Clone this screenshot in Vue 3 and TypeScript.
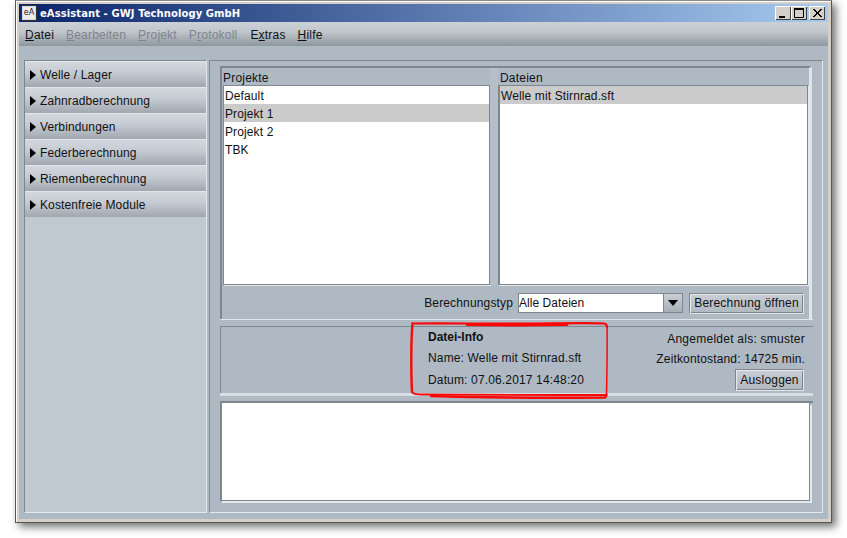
<script setup lang="ts">
const navItems: string[] = ['Welle / Lager', 'Zahnradberechnung', 'Verbindungen', 'Federberechnung', 'Riemenberechnung', 'Kostenfreie Module']
const menus = [
  { k: 'D', r: 'atei', off: false, pre: '' },
  { k: 'B', r: 'earbeiten', off: true, pre: '' },
  { k: 'P', r: 'rojekt', off: true, pre: '' },
  { k: 'r', r: 'otokoll', off: true, pre: 'P' },
  { k: 'x', r: 'tras', off: false, pre: 'E' },
  { k: 'H', r: 'ilfe', off: false, pre: '' },
]
const projects: string[] = ['Default', 'Projekt 1', 'Projekt 2', 'TBK']
</script>

<template>
  <div class="page">
    <div class="window">
      <header class="titlebar">
        <span class="appicon">eA</span>
        <span class="title">eAssistant - GWJ Technology GmbH</span>
        <span class="winbtns">
          <span class="wb"><svg width="16" height="14" viewBox="0 0 16 14"><rect x="4" y="10" width="6" height="2" fill="#000" /></svg></span>
          <span class="wb"><svg width="16" height="14" viewBox="0 0 16 14"><path d="M3.5 2.5h9v9h-9z" fill="none" stroke="#000" /><rect x="3" y="2" width="10" height="2" fill="#000" /></svg></span>
          <span class="wb gap"><svg width="16" height="14" viewBox="0 0 16 14"><path d="M4 3l8 8M5 3l8 8M12 3l-8 8M13 3l-8 8" stroke="#000" fill="none" /></svg></span>
        </span>
      </header>
      <nav class="menubar">
        <span v-for="m in menus" :key="m.k + m.r" class="menu" :class="{ off: m.off }">{{ m.pre }}<u>{{ m.k }}</u>{{ m.r }}</span>
      </nav>
      <div class="body">
        <aside class="side">
          <div v-for="n in navItems" :key="n" class="nav">
            <svg class="tri" width="6" height="10" viewBox="0 0 6 10"><path d="M0 0l6 5-6 5z" fill="#000" /></svg>
            <span>{{ n }}</span>
          </div>
        </aside>
        <main class="main">
          <section class="upper">
            <div class="lists">
              <div class="col left">
                <div class="head">Projekte</div>
                <ul class="list">
                  <li v-for="p in projects" :key="p" :class="{ sel: p === 'Projekt 1' }">{{ p }}</li>
                </ul>
              </div>
              <div class="split"></div>
              <div class="col right">
                <div class="head">Dateien</div>
                <ul class="list">
                  <li class="sel">Welle mit Stirnrad.sft</li>
                </ul>
              </div>
            </div>
            <div class="toolbar">
              <span class="lbl">Berechnungstyp</span>
              <div class="combo">
                <span class="val">Alle Dateien</span>
                <span class="arrow"><svg width="10" height="6" viewBox="0 0 10 6"><path d="M0 0h10L5 6z" fill="#000" /></svg></span>
              </div>
              <button class="btn open" type="button">Berechnung öffnen</button>
            </div>
          </section>
          <div class="band"></div>
          <section class="info">
            <div class="fileinfo">
              <div class="fh">Datei-Info</div>
              <div class="fl">Name: Welle mit Stirnrad.sft</div>
              <div class="fl">Datum: 07.06.2017 14:48:20</div>
            </div>
            <div class="account">
              <div class="al">Angemeldet als: smuster</div>
              <div class="al">Zeitkontostand: 14725 min.</div>
              <button class="btn logout" type="button">Ausloggen</button>
            </div>
          </section>
          <div class="band2"></div>
          <div class="log"></div>
        </main>
      </div>
    </div>
    <svg class="mark" width="210" height="90" viewBox="0 0 210 90">
      <g fill="none" stroke="#fa0808" stroke-linecap="round" stroke-linejoin="round">
        <path d="M6 5.500C40 5 90 6 130 5.500S190 5 197 5.500Q200 6 200 9" stroke-width="2.2" />
        <path d="M60 6.500c30 .5 70 .5 100 0" stroke-width="3" />
        <path d="M200 9c.5 15 0 40-.5 68" stroke-width="1.5" />
        <path d="M5.500 5.500C4 20 4 55 5 74" stroke-width="2.4" />
        <path d="M5 74c1 2 3 2.500 10 2.500 50 .5 120 .5 184 .5" stroke-width="1.8" />
        <path d="M24 78c50 1.500 110 2 174 1.500 1.500-.5 1.500-1.500 1.500-3" stroke-width="2.4" />
      </g>
    </svg>
  </div>
</template>

<style>
html, body { margin: 0; background: #fff; }
</style>

<style scoped>
.page {
  position: relative;
  width: 847px;
  height: 538px;
  padding-left: 15px;
  box-sizing: border-box;
  overflow: hidden;
  background: #fff;
  font-family: "Liberation Sans", Arial, sans-serif;
  font-size: 12px;
  color: #111;
}
.window {
  width: 817px;
  height: 523px;
  box-sizing: border-box;
  border: 1px solid #555;
  border-top-color: #8a8a8a;
  padding: 3px;
  background: #d4d0c8;
  box-shadow: inset 1px 1px 0 #fff, 4px 4px 8px rgba(0, 0, 0, 0.55);
  display: flex;
  flex-direction: column;
}
.titlebar {
  height: 18px;
  flex: none;
  display: flex;
  align-items: center;
  background: linear-gradient(90deg, #0a246a, #a6caf0);
  padding-left: 2px;
}
.appicon {
  width: 16px;
  height: 16px;
  flex: none;
  box-sizing: border-box;
  border: 1px solid #333;
  outline: 1px solid #cfd6e4;
  outline-offset: -2px;
  background: #eee;
  font: 8px/14px "DejaVu Sans", sans-serif;
  color: #222;
  text-align: center;
  overflow: hidden;
}
.title {
  margin-left: 3px;
  color: #fff;
  font: bold 10px "DejaVu Sans", Verdana, sans-serif;
  letter-spacing: 0.08px;
  white-space: nowrap;
}
.winbtns { margin-left: auto; display: flex; margin-right: 3px; }
.wb {
  width: 16px;
  height: 14px;
  background: #d4d0c8;
  box-shadow: inset 1px 1px 0 #fff, inset -1px -1px 0 #404040;
  display: block;
}
.wb svg { display: block; }
.wb.gap { margin-left: 2px; }
.menubar {
  height: 24px;
  flex: none;
  box-sizing: border-box;
  display: flex;
  align-items: center;
  padding: 2px 0 0 6px;
  gap: 12px;
  background: linear-gradient(#ccd1d6, #c0c6cc 40%, #8f979e);
}
.menu { color: #111; letter-spacing: 0.2px; }
.menu:nth-child(5) { margin-left: 1px; }
.menu.off { color: #7d858c; }
.body {
  flex: 1;
  min-height: 0;
  display: flex;
  gap: 2px;
  padding: 14px 5px 6px;
  background: #aeb9c3;
}
.side {
  width: 183px;
  flex: none;
  box-sizing: border-box;
  border: 1px solid;
  border-color: #7f868c #e4e9ee #e4e9ee #7f868c;
  background: #c0c8d0;
}
.nav {
  height: 26px;
  box-sizing: border-box;
  display: flex;
  align-items: center;
  padding-left: 5px;
  gap: 4px;
  background: linear-gradient(#d3d8de, #c4cad1 45%, #a0a7ae);
  border-top: 1px solid #e3e7eb;
  letter-spacing: 0.12px;
}
.tri { flex: none; }
.main {
  flex: 1;
  min-width: 0;
  box-sizing: border-box;
  border: 1px solid;
  border-color: #7f868c #e4e9ee #e4e9ee #7f868c;
  padding: 5px 10px 9px 10px;
  display: flex;
  flex-direction: column;
}
.upper {
  height: 253px;
  flex: none;
  box-sizing: border-box;
  border-top: 2px solid #7f868c;
  border-left: 2px solid #7f868c;
  border-right: 3px solid #dfe5ea;
  display: flex;
  flex-direction: column;
}
.lists { display: flex; height: 217px; flex: none; padding-left: 1px; }
.col { display: flex; flex-direction: column; }
.left { width: 267px; }
.right { width: 310px; }
.split { width: 8px; flex: none; background: #b5bfc9; }
.head { height: 17px; line-height: 20px; letter-spacing: 0.2px; }
.right .head { padding-left: 2px; }
.list {
  flex: 1;
  margin: 0;
  padding: 0;
  list-style: none;
  background: #fff;
  border: 1px solid #7f868c;
  box-shadow: 1px 1px 0 #e4e9ee;
}
.right .list { border-left-width: 2px; }
.list li { height: 18px; line-height: 20px; padding-left: 1px; letter-spacing: 0.12px; }
.list li.sel { background: #cbcbcb; }
.toolbar {
  flex: 1;
  display: flex;
  align-items: center;
  justify-content: flex-end;
  padding: 2px 5px 0 0;
}
.lbl { margin-right: 5px; letter-spacing: 0.15px; }
.combo {
  width: 165px;
  height: 20px;
  box-sizing: border-box;
  border: 1px solid #7f868c;
  background: #fff;
  display: flex;
  margin-right: 6px;
}
.val { flex: 1; line-height: 19px; letter-spacing: 0.05px; }
.arrow {
  width: 18px;
  background: linear-gradient(#c9cfd5, #a6aeb5);
  border-left: 1px solid #7f868c;
  display: flex;
  align-items: center;
  justify-content: center;
}
.btn {
  box-sizing: border-box;
  height: 21px;
  padding: 0;
  border: 1px solid #7f868c;
  border-right-color: #dfe5ea;
  border-bottom-color: #dfe5ea;
  box-shadow: inset 1px 1px 0 #e4e9ee, inset -1px -1px 0 #7f868c;
  background: linear-gradient(#c8ced4, #b0b8c0);
  font: inherit;
  color: #111;
  letter-spacing: 0.2px;
}
.open { width: 115px; }
.band {
  height: 8px;
  flex: none;
  box-sizing: border-box;
  margin-right: -1px;
  border-top: 1px solid #dfe5ea;
  border-bottom: 1px solid #7f868c;
}
.info {
  height: 66px;
  flex: none;
  box-sizing: border-box;
  border-left: 1px solid #7f868c;
  margin-right: -1px;
  padding-left: 207px;
  display: flex;
  justify-content: space-between;
}
.fileinfo { padding-top: 3px; }
.fh { height: 21px; line-height: 14px; font-weight: bold; }
.fl { height: 22px; line-height: 14px; letter-spacing: 0.15px; }
.account {
  display: flex;
  flex-direction: column;
  align-items: flex-end;
  padding: 5px 9px 0 0;
}
.al { height: 20px; line-height: 14px; margin-right: -1px; letter-spacing: 0.25px; }
.al + .al { letter-spacing: 0.15px; }
.logout { width: 69px; height: 22px; margin-top: -3px; }
.band2 {
  height: 10px;
  flex: none;
  box-sizing: border-box;
  margin-right: -1px;
  border-top: 3px solid #d8dee4;
  border-bottom: 2px solid #7f868c;
}
.log {
  flex: 1;
  margin: 0 2px 2px 0;
  box-sizing: border-box;
  background: #fff;
  border-left: 2px solid #7f868c;
  border-right: 1px solid #7f868c;
  border-bottom: 1px solid #7f868c;
  box-shadow: 2px 2px 0 #e4e9ee;
}
.mark { position: absolute; left: 407px; top: 318px; }
</style>
